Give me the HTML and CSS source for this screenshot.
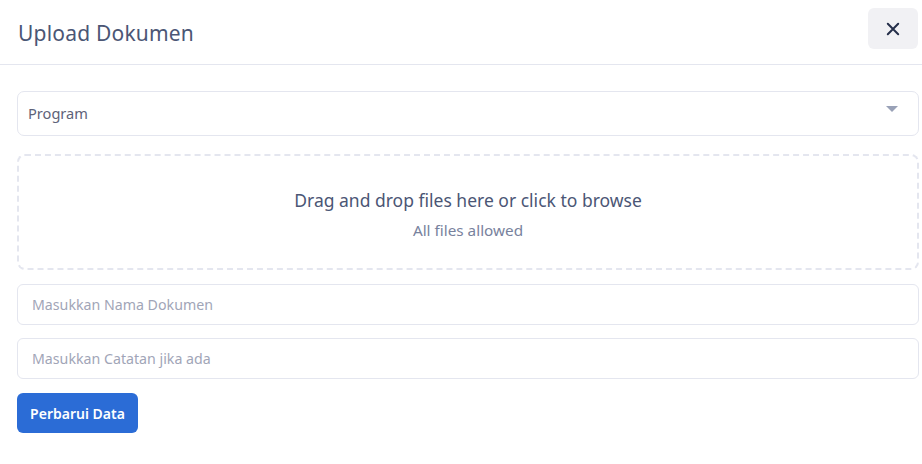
FILE: index.html
```html
<!DOCTYPE html>
<html>
<head>
<meta charset="utf-8">
<link rel="stylesheet" href="styles.css">
</head>
<body>
<div class="modal">
  <div class="modal-header">
    <h2 class="modal-title">Upload Dokumen</h2>
    <button class="btn-close" type="button" aria-label="Close">
      <svg width="16" height="16" viewBox="0 0 16 16"><path d="M2.8 2.8 L13.2 13.2 M13.2 2.8 L2.8 13.2" stroke="#252f4a" stroke-width="2" stroke-linecap="round" fill="none"/></svg>
    </button>
  </div>
  <div class="modal-body">
    <div class="select">
      <span class="select-label">Program</span>
      <span class="caret"></span>
    </div>
    <div class="dropzone">
      <div class="dz-title">Drag and drop files here or click to browse</div>
      <div class="dz-sub">All files allowed</div>
    </div>
    <input class="field" type="text" placeholder="Masukkan Nama Dokumen">
    <input class="field" type="text" placeholder="Masukkan Catatan jika ada">
    <div class="actions">
      <button class="btn-primary" type="button">Perbarui Data</button>
    </div>
  </div>
</div>
</body>
</html>
```
FILE: styles.css
```css
* { box-sizing: border-box; }
html, body { margin: 0; padding: 0; background: #ffffff; }
body {
  font-family: "Segoe UI", "Noto Sans", "Open Sans", sans-serif;
  color: #4b5675;
  width: 922px;
  height: 464px;
  overflow: hidden;
}
.modal {
  width: 922px;
  background: #fff;
}
.modal-header {
  height: 65px;
  border-bottom: 1px solid #e4e6ef;
  display: flex;
  align-items: center;
  justify-content: space-between;
  padding: 0 4px 0 18px;
}
.modal-title {
  margin: 0;
  font-weight: 400;
  font-size: 21px;
  color: #4b5675;
  letter-spacing: 0.2px;
  margin-top: 1px;
}
.btn-close {
  width: 50px;
  height: 41px;
  border: none;
  border-radius: 6px;
  background: #f1f1f4;
  display: flex;
  align-items: center;
  justify-content: center;
  padding: 0;
  margin-top: -7px;
}
.modal-body {
  padding: 26px 0 0 17px;
  width: 919px;
  display: flex;
  flex-direction: column;
}
.select {
  height: 45px;
  border: 1px solid #e4e6ef;
  border-radius: 7px;
  display: flex;
  align-items: center;
  justify-content: space-between;
  padding: 0 20px 2px 10px;
}
.select-label {
  font-size: 14.6px;
  color: #5e6278;
}
.caret {
  width: 0;
  height: 0;
  border-left: 6px solid transparent;
  border-right: 6px solid transparent;
  border-top: 6px solid #99a1b7;
  margin-top: -8px;
}
.dropzone {
  margin-top: 18px;
  height: 116px;
  border: 2px dashed #e4e6ef;
  border-radius: 8px;
  display: flex;
  flex-direction: column;
  align-items: center;
  justify-content: center;
  padding-top: 4px;
}
.dz-title {
  font-size: 17.5px;
  color: #4b5675;
}
.dz-sub {
  font-size: 15.3px;
  color: #78829d;
  margin-top: 8px;
}
.field {
  height: 41px;
  margin-top: 14px;
  border: 1px solid #e4e6ef;
  border-radius: 6px;
  padding: 0 14px;
  font-family: inherit;
  font-size: 14.2px;
  color: #4b5675;
  outline: none;
}
.field + .field { margin-top: 13px; }
.field::placeholder { color: #a1a5b7; }
.actions { margin-top: 14px; }
.btn-primary {
  width: 121px;
  height: 40px;
  border: none;
  border-radius: 6px;
  background: #2b6cd6;
  color: #ffffff;
  font-family: inherit;
  font-size: 14px;
  font-weight: 600;
  padding: 0;
}
```
